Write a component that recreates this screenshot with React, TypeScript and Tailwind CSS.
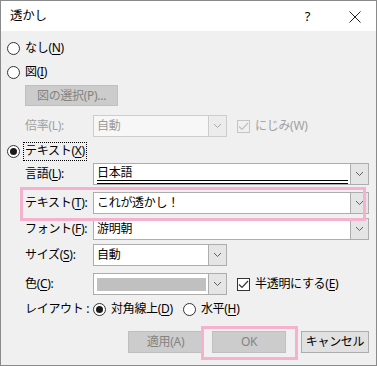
import React from 'react';

// Windows-style "透かし" (watermark) dialog

const Chevron = ({ disabled }: { disabled?: boolean }) => (
  <svg width="9" height="6" viewBox="0 0 9 6">
    <path d="M1 1 L4.5 4.5 L8 1" fill="none" stroke={disabled ? '#a8a8a8' : '#606060'} strokeWidth="1" />
  </svg>
);

const Radio = ({ checked }: { checked?: boolean }) => (
  <div className="flex h-[13px] w-[13px] items-center justify-center rounded-full border border-[#333] bg-white">
    {checked && <div className="h-[7px] w-[7px] rounded-full bg-[#1a1a1a]" />}
  </div>
);

const Check = ({ disabled }: { disabled?: boolean }) => (
  <div
    className={`flex h-[13px] w-[13px] items-center justify-center border ${
      disabled ? 'border-[#c4c4c4] bg-[#f0f0f0]' : 'border-[#333] bg-white'
    }`}
  >
    <svg width="11" height="9" viewBox="0 0 11 9">
      <path d="M1 4.5 L4 7.5 L10 1" fill="none" stroke={disabled ? '#c0c0c0' : '#333'} strokeWidth="1.2" />
    </svg>
  </div>
);

const U = ({ children }: { children: React.ReactNode }) => <span className="underline underline-offset-2">{children}</span>;

interface ComboProps {
  className: string;
  disabled?: boolean;
  children?: React.ReactNode;
}

const Combo = ({ className, disabled, children }: ComboProps) => (
  <div
    className={`flex h-[22px] border ${disabled ? 'border-[#cccccc] bg-[#f7f7f7] text-[#9a9a9a]' : 'border-[#adadad] bg-white text-black'} ${className}`}
  >
    <div className="flex min-w-0 flex-1 items-center pl-[3px]">{children}</div>
    <div
      className={`flex w-[18px] items-center justify-center border-l ${
        disabled ? 'border-[#cccccc] bg-[#ececec]' : 'border-[#adadad] bg-[#e5e5e5]'
      }`}
    >
      <Chevron disabled={disabled} />
    </div>
  </div>
);

const Label = ({ children, disabled }: { children: React.ReactNode; disabled?: boolean }) => (
  <div className={`w-[68px] shrink-0 whitespace-nowrap ${disabled ? 'text-[#a0a0a0]' : 'text-black'}`}>{children}</div>
);

export default function App() {
  return (
    <div className="relative h-[366px] w-[377px] overflow-hidden border border-[#8a8a8a] bg-[#f0f0f0] font-['Noto_Sans','Noto_Sans_CJK_JP',sans-serif] text-[12px] leading-none tracking-[-0.3px] text-black">
      {/* Title bar */}
      <div className="flex h-[30px] items-center bg-white">
        <div className="pl-[9px] text-[12.5px]">透かし</div>
        <div className="ml-auto pr-[66px] text-[13px]">?</div>
      </div>
      <svg className="absolute left-[348px] top-[10px]" width="12" height="12" viewBox="0 0 12 12">
        <path d="M0.5 0.5 L11.5 11.5 M11.5 0.5 L0.5 11.5" stroke="#222" strokeWidth="1" />
      </svg>

      {/* Body */}
      <div className="flex flex-col">
        <div className="mt-[6px] flex h-[22px] items-center gap-[5px] pl-[6px]">
          <Radio />
          <span>
            なし(<U>N</U>)
          </span>
        </div>
        <div className="mt-[2px] flex h-[22px] items-center gap-[5px] pl-[6px]">
          <Radio />
          <span>
            図(<U>I</U>)
          </span>
        </div>
        <div className="mt-[2px] flex h-[21px] pl-[24px]">
          <div className="flex w-[93px] items-center justify-center border border-[#bfbfbf] bg-[#cccccc] text-[#838383]">
            図の選択(P)...
          </div>
        </div>
        <div className="mt-[9px] flex h-[22px] items-center pl-[24px]">
          <Label disabled>倍率(L):</Label>
          <Combo className="w-[134px]" disabled>
            自動
          </Combo>
          <div className="ml-[10px] flex items-center gap-[5px] text-[#a0a0a0]">
            <Check disabled />
            <span>にじみ(W)</span>
          </div>
        </div>
        <div className="mt-[4px] flex h-[20px] items-center gap-[3px] pl-[6px]">
          <Radio checked />
          <span className="flex h-[19px] items-center border border-dotted border-black px-[1px]">
            テキスト(<U>X</U>)
          </span>
        </div>
        <div className="mt-[2px] flex h-[22px] items-center pl-[24px]">
          <Label>
            言語(<U>L</U>):
          </Label>
          <Combo className="w-[276px]">
            <div className="flex h-[22px] w-full flex-col justify-between pt-[4px] pr-[2px]">
              <span>日本語</span>
              <div className="mb-[1px] h-[4px] border-y border-black" />
            </div>
          </Combo>
        </div>
        <div className="mt-[7px] flex h-[22px] items-center pl-[24px]">
          <Label>
            テキスト(<U>T</U>):
          </Label>
          <Combo className="w-[276px]">これが透かし！</Combo>
        </div>
        <div className="mt-[4px] flex h-[22px] items-center pl-[24px]">
          <Label>
            フォント(<U>F</U>):
          </Label>
          <Combo className="w-[276px]">游明朝</Combo>
        </div>
        <div className="mt-[4px] flex h-[22px] items-center pl-[24px]">
          <Label>
            サイズ(<U>S</U>):
          </Label>
          <Combo className="w-[134px]">自動</Combo>
        </div>
        <div className="mt-[7px] flex h-[22px] items-center pl-[24px]">
          <Label>
            色(<U>C</U>):
          </Label>
          <Combo className="w-[134px]">
            <div className="mr-[2px] h-[13px] w-full bg-[#c0c0c0]" />
          </Combo>
          <div className="ml-[10px] flex items-center gap-[5px]">
            <Check />
            <span>
              半透明にする(<U>E</U>)
            </span>
          </div>
        </div>
        <div className="mt-[4px] flex h-[20px] items-center pl-[24px]">
          <Label>レイアウト :</Label>
          <div className="flex items-center gap-[5px]">
            <Radio checked />
            <span>
              対角線上(<U>D</U>)
            </span>
          </div>
          <div className="ml-[10px] flex items-center gap-[5px]">
            <Radio />
            <span>
              水平(<U>H</U>)
            </span>
          </div>
        </div>
        <div className="mt-[12px] flex h-[22px] pl-[127px]">
          <div className="flex w-[75px] items-center justify-center border border-[#bfbfbf] bg-[#cccccc] text-[#838383]">
            適用(A)
          </div>
          <div className="ml-[9px] flex w-[74px] items-center justify-center border border-[#bfbfbf] bg-[#cccccc] text-[#838383]">
            OK
          </div>
          <div className="ml-[15px] flex w-[68px] items-center justify-center border border-[#adadad] bg-[#e1e1e1]">
            キャンセル
          </div>
        </div>
      </div>

      {/* Pink annotation frames */}
      <div className="pointer-events-none absolute left-[19px] top-[186px] h-[34px] w-[346px] border-[3px] border-[#f5b1cd]" />
      <div className="pointer-events-none absolute left-[200px] top-[325px] h-[34px] w-[97px] border-[3px] border-[#f5b1cd]" />
    </div>
  );
}
